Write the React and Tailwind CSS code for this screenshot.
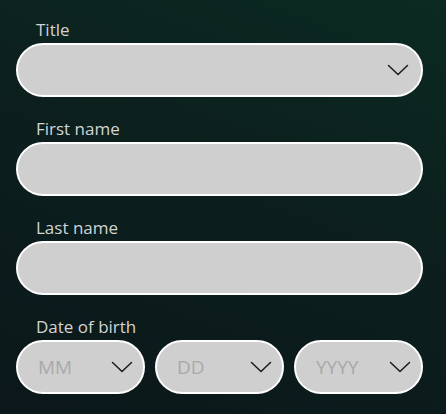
import React from 'react'

function Chevron() {
  return (
    <svg width="22" height="12" viewBox="0 0 22 12" fill="none" className="shrink-0">
      <path d="M1.5 1.5 L11 10.5 L20.5 1.5" stroke="#1a1a1a" strokeWidth="1.5" strokeLinecap="round" strokeLinejoin="round" />
    </svg>
  )
}

function Field({ label, select }) {
  return (
    <div className="flex flex-col">
      <label className="pl-5 text-[17px] leading-[22px] text-[#d2d4d3]">{label}</label>
      <div className="mt-[2px] flex h-[54px] items-center justify-end rounded-full border-2 border-white bg-[#cfcfcf] pr-[12px]">
        {select && <Chevron />}
      </div>
    </div>
  )
}

function DatePart({ placeholder }) {
  return (
    <div className="flex h-[54px] flex-1 items-center justify-between rounded-full border-2 border-white bg-[#cfcfcf] pl-[20px] pr-[10px]">
      <span className="text-[19px] text-[#a9a9a9]">{placeholder}</span>
      <Chevron />
    </div>
  )
}

export default function App() {
  return (
    <div
      className="flex h-[414px] w-[446px] flex-col gap-[21px] bg-[linear-gradient(200deg,#0b2a22_0%,#0c201e_40%,#0b171a_100%)] pl-[16px] pr-[23px] pt-[19px]"
      style={{ fontFamily: '"Open Sans", "Noto Sans", sans-serif' }}
    >
      <Field label="Title" select />
      <Field label="First name" />
      <Field label="Last name" />
      <div className="flex flex-col">
        <label className="pl-5 text-[17px] leading-[22px] text-[#d2d4d3]">Date of birth</label>
        <div className="mt-[2px] flex gap-[10px]">
          <DatePart placeholder="MM" />
          <DatePart placeholder="DD" />
          <DatePart placeholder="YYYY" />
        </div>
      </div>
    </div>
  )
}
